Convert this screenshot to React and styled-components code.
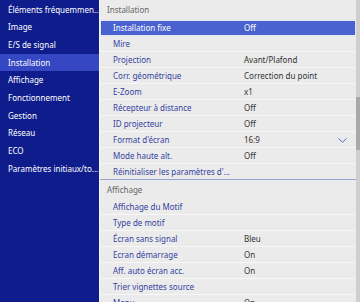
import React from "react"
import styled, { createGlobalStyle } from "styled-components"

const Global = createGlobalStyle`
  html, body { margin:0; padding:0; background:#ebebeb; }
  body { font-family:"Noto Sans","Open Sans",sans-serif; font-size:8px; }
`

const Screen = styled.div`
  width:360px;
  height:302px;
  display:flex;
  overflow:hidden;
  background:#ebebeb;
`
const Side = styled.div`
  width:100px;
  flex:none;
  background:#0f1d8c;
  padding-top:0.5px;
  border-right:1px solid #f4f4f4;
  box-sizing:border-box;
`
const SideItem = styled.div`
  height:17.7px;
  line-height:17.7px;
  padding-left:8px;
  color:#fff;
  white-space:nowrap;
  overflow:hidden;
  background:${p => (p.active ? "#3547c2" : "transparent")};
`
const Main = styled.div`
  flex:1;
  display:flex;
  min-width:0;
`
const List = styled.div`
  flex:1;
  min-width:0;
`
const Header = styled.div`
  height:${p => p.h}px;
  line-height:${p => p.h}px;
  padding-left:7px;
  color:#666;
`
const Row = styled.div`
  height:16px;
  box-sizing:border-box;
  display:grid;
  grid-template-columns:144px 1fr 18px;
  align-items:center;
  border-bottom:1px solid ${p => (p.last ? "#9aa3cf" : "#f7f7f7")};
  background:${p => (p.sel ? "#4a62cf" : "transparent")};
  outline:${p => (p.sel ? "1px solid #e4e8f8" : "none")};
  outline-offset:-1px;
  color:${p => (p.sel ? "#fff" : "#333")};
`
const Label = styled.span`
  padding-left:13px;
  color:${p => (p.sel ? "#fff" : "#35429f")};
  white-space:nowrap;
  overflow:hidden;
`
const Value = styled.span`
  white-space:nowrap;
`
const Scroll = styled.div`
  width:4px;
  flex:none;
  background:#cfcfcf;
  display:flex;
  flex-direction:column;
  padding-top:97px;
`
const Thumb = styled.div`
  height:53px;
  background:#a9a9a9;
`

const Chevron = () => (
  <svg width="9" height="5" viewBox="0 0 9 5">
    <path d="M0.5 0.5 L4.5 4.2 L8.5 0.5" fill="none" stroke="#5a6ac6" strokeWidth="1" />
  </svg>
)

const sideItems = [
  "Éléments fréquemmen...",
  "Image",
  "E/S de signal",
  "Installation",
  "Affichage",
  "Fonctionnement",
  "Gestion",
  "Réseau",
  "ECO",
  "Paramètres initiaux/to...",
]

const install = [
  ["Installation fixe", "Off"],
  ["Mire", ""],
  ["Projection", "Avant/Plafond"],
  ["Corr. géométrique", "Correction du point"],
  ["E-Zoom", "x1"],
  ["Récepteur à distance", "Off"],
  ["ID projecteur", "Off"],
  ["Format d'écran", "16:9", true],
  ["Mode haute alt.", "Off"],
  ["Réinitialiser les paramètres d'...", ""],
]

const display = [
  ["Affichage du Motif", ""],
  ["Type de motif", ""],
  ["Écran sans signal", "Bleu"],
  ["Ecran démarrage", "On"],
  ["Aff. auto écran acc.", "On"],
  ["Trier vignettes source", ""],
  ["Menu", "On"],
]

export default function App() {
  return (
    <Screen>
      <Global />
      <Side>
        {sideItems.map((s, i) => (
          <SideItem key={s} active={i === 3}>{s}</SideItem>
        ))}
      </Side>
      <Main>
        <List>
          <Header h={20}>Installation</Header>
          {install.map(([l, v, drop], i) => (
            <Row key={l} sel={i === 0} last={i === install.length - 1}>
              <Label sel={i === 0}>{l}</Label>
              <Value>{v}</Value>
              <span>{drop && <Chevron />}</span>
            </Row>
          ))}
          <Header h={19}>Affichage</Header>
          {display.map(([l, v]) => (
            <Row key={l}>
              <Label>{l}</Label>
              <Value>{v}</Value>
              <span />
            </Row>
          ))}
        </List>
        <Scroll>
          <Thumb />
        </Scroll>
      </Main>
    </Screen>
  )
}
